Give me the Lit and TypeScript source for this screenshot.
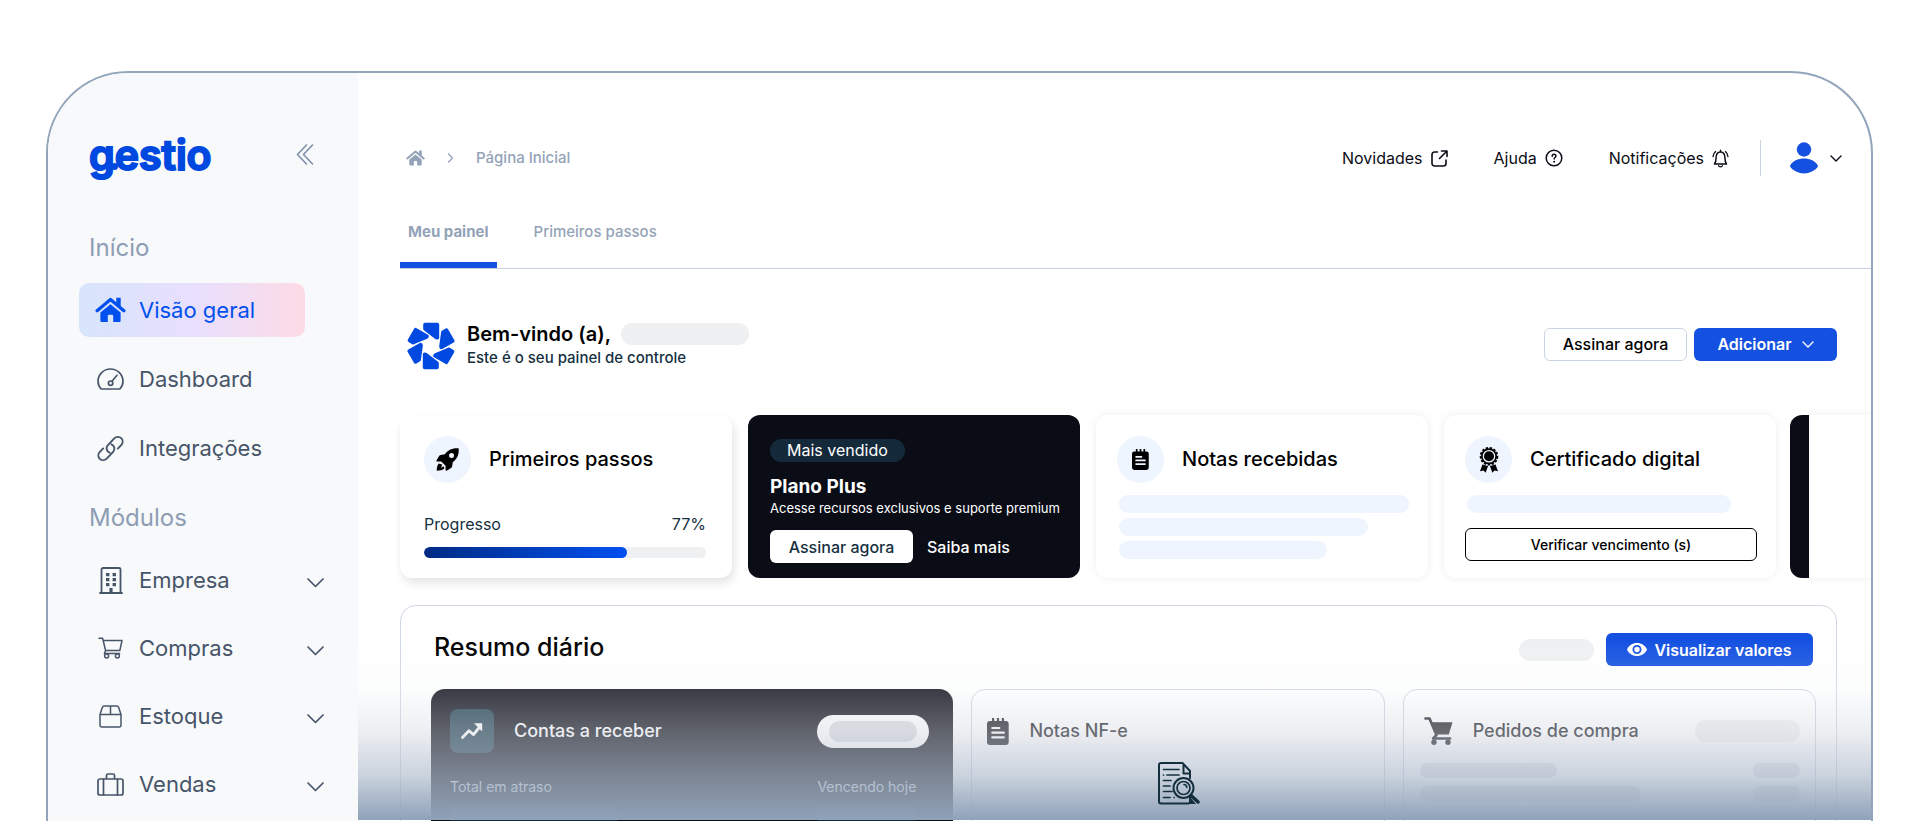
import { LitElement, html, css, svg, nothing, TemplateResult } from "lit";
import { customElement, property } from "lit/decorators.js";
import { classMap } from "lit/directives/class-map.js";

type Glyph = { w: number; h: number; box: string; body: TemplateResult };

const line = (d: string, width: number) =>
  svg`<path d=${d} fill="none" stroke="currentColor" stroke-width=${width} stroke-linecap="round" stroke-linejoin="round"></path>`;

const house = svg`
  <path d="M1.6 14.2 15.5 2.6 29.4 14.2" fill="none" stroke="currentColor" stroke-width="3.4" stroke-linecap="round" stroke-linejoin="round"></path>
  <path d="M21.5 0.8h4.6v9.4l-4.6-4z" fill="currentColor"></path>
  <path d="M15.5 7.4 26 16.2V24.6a1.4 1.4 0 0 1-1.4 1.4H18.3V19.6a1.2 1.2 0 0 0-1.2-1.2h-3.2a1.2 1.2 0 0 0-1.2 1.2V26H6.4A1.4 1.4 0 0 1 5 24.600V16.200z" fill="currentColor"></path>`;

const notepad = svg`
  <path d="M3 3h2V.6a.6.6 0 0 1 2.200 0V3h2.700V.6a.6.6 0 0 1 2.200 0V3h2.700V.6a.6.6 0 0 1 2.200 0V3h1.700a3 3 0 0 1 3 3v18a3 3 0 0 1-3 3H3a3 3 0 0 1-3-3V6a3 3 0 0 1 3-3z" fill="currentColor"></path>
  <path d="M5.300 10h7M5.300 14.700h11.500M5.300 19.400h11.500" stroke="var(--cut, #fff)" stroke-width="2.200" stroke-linecap="round"></path>`;

const glyphs: Record<string, Glyph> = {
  house: { w: 31, h: 26, box: "0 0 31 27", body: house },
  houseSmall: { w: 19, h: 16, box: "0 0 31 27", body: house },
  gauge: {
    w: 27, h: 22, box: "0 0 27 22",
    body: svg`${line("M4.200 21C2.300 19 1 16.500 1 13.300 1 6.400 6.600 1 13.500 1S26 6.400 26 13.300c0 3.200-1.300 5.700-3.200 7.700z", 1.700)}
      ${line("M15 13.300 20 7.300", 1.700)}<circle cx="13.600" cy="15.200" r="2.200" fill="none" stroke="currentColor" stroke-width="1.700"></circle>`,
  },
  link: {
    w: 27, h: 27, box: "0 0 27 27",
    body: svg`${line("M12.600 17.700c-3.200-1.300-4-5.200-1.700-7.600L17.300 3.400c2-2 5-2.100 6.900-.2s1.900 4.900 0 6.900l-3.400 3.500", 1.900)}
      ${line("M14.400 9.300c3.200 1.300 4 5.200 1.700 7.600L9.700 23.600c-2 2-5 2.100-6.900.2s-1.900-4.900 0-6.900l3.400-3.500", 1.900)}`,
  },
  building: {
    w: 24, h: 27, box: "0 0 24 27",
    body: svg`${line("M1 26h22M2.500 26V2.500A1.500 1.500 0 0 1 4 1h16a1.500 1.500 0 0 1 1.500 1.500V26", 1.800)}
      <path d="M7 6h3.400v3.200H7zM13.600 6H17v3.200h-3.400zM7 11h3.400v3.200H7zM13.600 11H17v3.200h-3.400zM7 16h3.400v3.200H7zM13.600 16H17v3.200h-3.400zM10.400 21h3.200v5h-3.200z" fill="currentColor"></path>`,
  },
  cart: {
    w: 25, h: 22, box: "0 0 25 22",
    body: svg`${line("M1 1.200h3.600l3 12.300h14.200L24 3.600H5.200M7.600 13.500l-1.200 3h15.200", 1.500)}
      <circle cx="8.600" cy="19" r="2" fill="none" stroke="currentColor" stroke-width="1.500"></circle><circle cx="19.400" cy="19" r="2" fill="none" stroke="currentColor" stroke-width="1.500"></circle>`,
  },
  box: {
    w: 23, h: 23, box: "0 0 23 23",
    body: line("M1 9.500V20a2 2 0 0 0 2 2h17a2 2 0 0 0 2-2V9.500L19.700 2.600A2.200 2.200 0 0 0 17.600 1H5.400a2.200 2.200 0 0 0-2.100 1.600zH22M11.500 1v8.500", 1.500),
  },
  suitcase: {
    w: 27, h: 23, box: "0 0 27 23",
    body: svg`${line("M3 6h21a2 2 0 0 1 2 2v12a2 2 0 0 1-2 2H3a2 2 0 0 1-2-2V8a2 2 0 0 1 2-2zM9.500 6V2.500A1.500 1.500 0 0 1 11 1h5a1.500 1.500 0 0 1 1.500 1.500V6", 1.700)}
      ${line("M6.500 6v16M20.500 6v16", 1.700)}`,
  },
  chevronDown: { w: 17, h: 10, box: "0 0 17 10", body: line("M1 1l7.500 7.500L16 1", 1.700) },
  chevronSmall: { w: 12, h: 7, box: "0 0 12 7", body: line("M1 1l5 5 5-5", 1.400) },
  chevronRight: { w: 7, h: 10, box: "0 0 7 10", body: line("M1.500 1l4 4-4 4", 1.300) },
  collapse: { w: 18, h: 21, box: "0 0 18 21", body: line("M10.500 1 1.500 10.500l9 9.500M16.500 1l-9 9.500 9 9.500", 1.600) },
  external: {
    w: 17, h: 17, box: "0 0 17 17",
    body: line("M6.500 2H3.500A2.500 2.500 0 0 0 1 4.500V13.500A2.500 2.500 0 0 0 3.500 16h9a2.500 2.500 0 0 0 2.500-2.500V10M10.500 1H16v5.500M16 1 8.500 8.500", 1.600),
  },
  help: {
    w: 18, h: 18, box: "0 0 18 18",
    body: svg`<circle cx="9" cy="9" r="7.800" fill="none" stroke="currentColor" stroke-width="1.500"></circle>
      ${line("M7.200 7.200c0-2.600 3.700-2.500 3.700-.1 0 1.300-1.800 1.500-1.800 3", 1.500)}<circle cx="9.100" cy="12.700" r="1" fill="currentColor"></circle>`,
  },
  bell: {
    w: 17, h: 19, box: "0 0 17 19",
    body: svg`${line("M2.500 15h12c-1.300-1.500-1.500-3-1.500-5.500C13 5.500 11.500 3 8.500 3S4 5.500 4 9.500C4 12 3.800 13.500 2.500 15zM8.500 3V1.200", 1.500)}
      ${line("M6.600 16.800c.6 1.300 3.200 1.300 3.800 0M3.600 2.600C2 4 1.200 5.600 1 7.600M13.400 2.600C15 4 15.800 5.600 16 7.600", 1.300)}`,
  },
  user: {
    w: 30, h: 32, box: "0 0 30 32",
    body: svg`<circle cx="15" cy="7.500" r="7.200" fill="currentColor"></circle>
      <path d="M1.200 23.400C3.600 19 9 16.600 15 16.600s11.400 2.400 13.800 6.800a1.400 1.400 0 0 1 0 1.300C26 28.600 20.500 31.400 15 31.400S4 28.600 1.200 24.700a1.400 1.400 0 0 1 0-1.300z" fill="currentColor"></path>`,
  },
  rocket: {
    w: 25, h: 25, box: "0 0 26 26",
    body: svg`<path fill-rule="evenodd" d="M24.600 1.400c-6.600-.6-11.200 1.700-14.400 6.200L6 8.200c-.7.100-1.300.5-1.700 1.100L1.500 14c-.3.600 0 1.200.7 1.200l4.300-.1 4.500 4.500-.1 4.300c0 .7.700 1 1.200.7l4.600-2.800c.6-.4 1-1 1.100-1.700l.7-4.200c4.500-3.300 6.700-7.900 6.100-14.500zM17.200 11.400a2.600 2.600 0 1 1 0-5.200 2.600 2.600 0 0 1 0 5.200z" fill="currentColor"></path>
      <path d="M3.800 17.200c-1.500 1.700-2 4.500-2 7.500 3.300 0 6.300-.6 7.900-2.300l-.6-2.400-2.700 1.500 1-3.300z" fill="currentColor"></path>`,
  },
  notepadSmall: { w: 17, h: 21, box: "0 0 22 27", body: notepad },
  notepad: { w: 22, h: 27, box: "0 0 22 27", body: notepad },
  medal: {
    w: 20, h: 26, box: "0 0 20 26",
    body: svg`<circle cx="10" cy="9.300" r="8.400" fill="none" stroke="currentColor" stroke-width="1.800" stroke-dasharray="2.400 1.600"></circle>
      <circle cx="10" cy="9.300" r="7.200" fill="none" stroke="currentColor" stroke-width="1.800"></circle><circle cx="10" cy="9.300" r="5" fill="currentColor"></circle>
      <path d="M3.600 17.200 1 24.200l3.600-.6 2 2.200 2.600-7c-2-.2-4-.6-5.600-1.600zM16.400 17.200l2.600 7-3.600-.6-2 2.200-2.600-7c2-.2 4-.6 5.600-1.600z" fill="currentColor"></path>`,
  },
  eye: {
    w: 20, h: 13, box: "0 0 20 13",
    body: svg`<path fill-rule="evenodd" d="M10 0C5.500 0 1.700 2.600 0 6.500 1.700 10.400 5.500 13 10 13s8.300-2.600 10-6.500C18.300 2.600 14.500 0 10 0zm0 11a4.500 4.500 0 1 1 0-9 4.500 4.500 0 0 1 0 9zm0-7.200a2.700 2.700 0 1 0 0 5.400 2.700 2.700 0 0 0 0-5.400z" fill="currentColor"></path>`,
  },
  trend: {
    w: 22, h: 18, box: "0 0 22 18",
    body: svg`<path d="M1.500 15.500 8 8.800l4.500 3.800L19 4.500" fill="none" stroke="currentColor" stroke-width="2.800" stroke-linecap="round" stroke-linejoin="round"></path><path d="M13 1.200h8.200v8.200z" fill="currentColor"></path>`,
  },
  cartSolid: {
    w: 29, h: 28, box: "0 0 29 28",
    body: svg`<path d="M1.500 1.500h4l7 16.500-3.300 3.500H26" fill="none" stroke="currentColor" stroke-width="2.700" stroke-linecap="round" stroke-linejoin="round"></path>
      <path d="M6.300 5.200h22.200l-3.700 12.300H11.400z" fill="currentColor"></path><circle cx="10" cy="25.200" r="2.700" fill="currentColor"></circle><circle cx="24" cy="25.200" r="2.700" fill="currentColor"></circle>`,
  },
  docSearch: {
    w: 42, h: 43, box: "0 0 42 43",
    body: svg`${line("M32 12v4M32 34v5.500A2 2 0 0 1 30 41.500H3A2 2 0 0 1 1 39.500V3A2 2 0 0 1 3 1H24.500L32 9v2.500H25.500V2", 2)}
      ${line("M5.500 7.500H21M9 13h12M5.500 13h.1M5.500 18.500H13M5.500 24H12M5.500 29.500H14M5.500 35.500H12M16 35.500h.1", 1.700)}
      <circle cx="25.500" cy="26" r="10" fill="none" stroke="currentColor" stroke-width="2"></circle><circle cx="25.500" cy="26" r="6.500" fill="none" stroke="currentColor" stroke-width="1.700"></circle>
      ${line("M26 22.500a3 3 0 0 1 2.800 2.800", 1.700)}${line("M33 33.500 40 40", 3.500)}<path d="M31.500 34.500 38 42h-6.500z" fill="currentColor"></path>`,
  },
  aperture: {
    w: 48, h: 48, box: "-24 -24 48 48",
    body: svg`${[0, 60, 120, 180, 240, 300].map((a) =>
      svg`<path transform="rotate(${a})" d="M-6-21.400H6.400V-8.200L5.400-8.400-6-17.200z" fill="currentColor" stroke="currentColor" stroke-width="3.600" stroke-linejoin="round"></path>`)}`,
  },
};

@customElement("app-icon")
class AppIcon extends LitElement {
  @property() name = "";
  static styles = css`
    :host { display: inline-flex; flex: none; }
    svg { display: block; }
  `;
  render() {
    const g = glyphs[this.name];
    return g
      ? html`<svg width=${g.w} height=${g.h} viewBox=${g.box} aria-hidden="true">${g.body}</svg>`
      : nothing;
  }
}

@customElement("app-root")
class AppRoot extends LitElement {
  static styles = css`
    :host {
      display: flex;
      box-sizing: border-box;
      height: 100vh;
      padding: 71px 47px 0 46px;
      overflow: hidden;
      background: #fff;
      color: #000;
      font-family: Inter, "Noto Sans", sans-serif;
      font-size: 16px;
      line-height: 24px;
      --blue: #1551e1;
      --brand: #0049e0;
      --muted: #94a3b8;
      --navy: #0a0d16;
      --skeleton: #eff0f2;
      --ice: #eff5fe;
    }
    * { box-sizing: border-box; }
    button { font: inherit; color: inherit; border: 0; background: none; padding: 0; cursor: pointer; }
    a { color: inherit; text-decoration: none; }
    ul { list-style: none; margin: 0; padding: 0; }
    h1, h2, h3, p { margin: 0; font-weight: inherit; font-size: inherit; }

    .frame {
      position: relative;
      flex: 1;
      min-width: 0;
      display: flex;
      border: 2px solid #93a5bb;
      border-bottom: 0;
      border-radius: 82px 82px 0 0;
      overflow: hidden;
    }

    .side { flex: none; width: 310px; padding: 61px 34px 0 31px; background: #f8f9fb; color: #475569; }
    .brandrow { display: flex; align-items: center; justify-content: space-between; height: 46px; padding: 0 10px; margin-bottom: 52px; }
    .logo { position: relative; align-self: flex-start; font-weight: 600; font-size: 41px; line-height: 42px; color: var(--brand); -webkit-text-stroke: 2px var(--brand); }
    .logo::after { content: ""; position: absolute; left: 22px; bottom: 6px; width: 7px; height: 7px; border-radius: 50%; background: var(--brand); }
    .collapse { color: #7d8fa9; }
    .heading { padding-left: 10px; font-size: 24px; line-height: 32px; color: #8d9db4; margin-bottom: 19px; }
    .links { display: grid; gap: 15px; margin: 0 19px 27px 0; }
    .modules { display: grid; gap: 14px; }
    .item {
      display: flex;
      align-items: center;
      gap: 13px;
      width: 100%;
      height: 54px;
      padding-left: 16px;
      border-radius: 10px;
      font-size: 22px;
      line-height: 30px;
      text-align: left;
    }
    .item.on { background: linear-gradient(90deg, #d7e5fb, #e8dffe 50%, #fddbe5); color: #0050f0; }
    .slot { flex: none; width: 31px; display: flex; justify-content: center; }
    .label { flex: 1; }
    .more { display: flex; padding-top: 6px; }

    .main { flex: 1; min-width: 0; padding: 67px 0 0 42px; }
    .top { display: flex; align-items: center; justify-content: space-between; height: 36px; padding: 0 29px 0 6px; }
    .crumbs { display: flex; align-items: center; gap: 22px; color: var(--muted); font-size: 15px; font-weight: 500; }
    .tools { display: flex; align-items: center; color: #0a0d16; font-size: 16px; }
    .tool { display: flex; align-items: center; gap: 8px; margin-right: 46px; }
    .tool.last { margin-right: 0; padding-right: 31px; }
    .account { display: flex; align-items: center; gap: 11px; height: 36px; padding-left: 28px; border-left: 1px solid #cbd5e1; }
    .avatar { color: var(--blue); }
    .tabs { display: flex; gap: 28px; margin-top: 44px; border-bottom: 1px solid #c5cfdf; color: var(--muted); font-size: 15px; font-weight: 500; }
    .tab { padding: 0 9px 18px; border-bottom: 6px solid transparent; }
    .tab.on { font-weight: 700; border-color: var(--blue); padding: 0 8px 18px; }

    .welcome { display: flex; align-items: center; justify-content: space-between; margin: 53px 34px 46px 0; }
    .hello { display: flex; align-items: center; gap: 12px; padding-left: 7px; height: 47px; color: var(--brand); }
    .hello h1 { display: flex; align-items: center; gap: 10px; font-size: 20px; font-weight: 600; color: #000; }
    .hello p { color: #16303f; line-height: 24px; font-size: 15px; font-weight: 500; }
    .pill { display: block; border-radius: 12px; background: var(--skeleton); height: 22px; }
    .w128 { width: 128px; }
    .w75 { width: 75px; }
    .w105 { width: 105px; }
    .actions { display: flex; gap: 7px; align-items: center; }
    .welcome .actions { padding-bottom: 3px; }
    .btn {
      display: flex;
      align-items: center;
      justify-content: center;
      gap: 10px;
      min-width: 143px;
      height: 33px;
      padding: 0 16px;
      border-radius: 6px;
      font-weight: 500;
      background: #fff;
      white-space: nowrap;
    }
    .outline { border: 1px solid #cbd5e1; }
    .dark { border: 1px solid #000; width: 100%; font-size: 14px; }
    .primary { background: var(--blue); color: #fff; font-weight: 600; }

    .strip { display: flex; gap: 16px; overflow: hidden; padding: 12px 0 20px 12px; margin: -12px 0 7px -12px; }
    .card {
      flex: 0 0 332px;
      min-width: 0;
      height: 163px;
      padding: 21px 24px 0;
      border-radius: 12px;
      background: #fff;
      box-shadow: 0 0 8px rgba(0, 0, 0, 0.07);
    }
    .card.raised { box-shadow: 2px 5px 10px rgba(0, 0, 0, 0.11); }
    .card.plus { background: var(--navy); color: #fff; padding: 24px 22px 0; box-shadow: none; }
    .card.flush { padding: 21px 19px 0 21px; }
    .title { display: flex; align-items: center; gap: 18px; font-size: 20px; line-height: 45px; font-weight: 500; margin-bottom: 12px; white-space: nowrap; }
    .disc { flex: none; display: flex; align-items: center; justify-content: center; width: 47px; height: 47px; border-radius: 50%; background: var(--ice); --cut: var(--ice); }
    .progress { display: flex; justify-content: space-between; margin: 29px 2px 11px 0; color: #16303f; }
    .track { height: 11px; margin-right: 2px; border-radius: 6px; background: var(--skeleton); overflow: hidden; }
    .fill { height: 100%; border-radius: 6px; background: linear-gradient(90deg, #002b84, #0050f0); }
    .tag { display: block; width: fit-content; padding: 0 17px; border-radius: 12px; background: #14293a; line-height: 23px; color: #fff; }
    .plan { font-size: 19px; font-weight: 700; margin-top: 13px; }
    .desc { font-size: 13px; line-height: 18px; white-space: nowrap; }
    .buy { display: flex; align-items: center; gap: 14px; margin-top: 13px; font-weight: 500; }
    .buy .btn { color: #16303f; }
    .bars { display: grid; gap: 5px; padding-left: 2px; }
    .bar { height: 18px; border-radius: 9px; background: var(--ice); }
    .verify { margin-top: 15px; }
    .next { flex: 0 0 19px; height: 163px; margin-left: -2px; border-radius: 12px 0 0 12px; background: var(--navy); }
    .after { flex: 1; height: 163px; margin-left: -16px; background: #fff; box-shadow: 0 0 8px rgba(0, 0, 0, 0.07); }

    .panel { margin-right: 34px; padding: 27px 20px 0 30px; height: 400px; border: 1px solid #cfd7e2; border-radius: 16px; }
    .phead { display: flex; align-items: flex-start; justify-content: space-between; padding: 0 3px; margin-bottom: 23px; }
    .phead h2 { font-size: 25px; font-weight: 500; line-height: 28px; }
    .phead .actions { gap: 12px; }
    .phead .btn { gap: 7px; min-width: 207px; }
    .grid { display: grid; grid-template-columns: 522fr 413fr 413fr; gap: 18px; height: 300px; }
    .cell { border: 1px solid #cbd5e1; border-radius: 14px; padding: 19px 15px; color: #16191f; font-size: 18px; background: #fff; }
    .cell.ink { background: var(--navy); border: 0; color: #fff; padding: 20px 24px 0 19px; }
    .row { display: flex; align-items: center; justify-content: space-between; height: 44px; }
    .lead { display: flex; align-items: center; gap: 20px; white-space: nowrap; font-weight: 500; }
    .chart { display: flex; align-items: center; justify-content: center; width: 44px; height: 44px; border-radius: 8px; background: #1d3c4d; }
    .badge { width: 112px; height: 33px; padding: 6px 12px; border-radius: 17px; background: #fff; }
    .badge .pill { height: 21px; background: #d9dbe0; }
    .pair { display: grid; grid-template-columns: 1fr 112px; font-size: 14px; margin-top: 22px; row-gap: 6px; color: #e6e9ee; }
    .pair .bar { background: #14293a; height: 22px; }
    .w168 { width: 168px; }
    .w100 { width: 100px; }
    .doc { position: relative; z-index: 2; display: flex; justify-content: center; color: #14303f; padding: 9px 0 0 2px; }
    .orders { padding: 19px 15px 0 16px; }
    .orders .bar { height: 15px; background: #e2e5ea; }
    .rows { display: grid; gap: 8px; margin-top: 10px; }
    .rows div { display: flex; justify-content: space-between; }
    .w137 { width: 137px; }
    .w221 { width: 221px; }
    .w47 { width: 47px; }
    .ico { margin-left: 4px; display: flex; }

    .fade {
      position: absolute;
      left: 310px;
      right: 0;
      bottom: 1px;
      height: 180px;
      pointer-events: none;
      background: linear-gradient(
        rgba(255, 255, 255, 0),
        rgba(240, 244, 245, 0.2) 27%,
        rgba(214, 217, 225, 0.42) 50%,
        rgba(178, 190, 206, 0.68) 75%,
        #90a2b8
      );
    }
  `;

  private nav = [
    ["house", "Visão geral"],
    ["gauge", "Dashboard"],
    ["link", "Integrações"],
  ];
  private modules = [
    ["building", "Empresa"],
    ["cart", "Compras"],
    ["box", "Estoque"],
    ["suitcase", "Vendas"],
  ];

  private icon = (name: string) => html`<app-icon name=${name}></app-icon>`;

  private sidebar() {
    return html`<nav class="side">
      <div class="brandrow">
        <a class="logo" href="#">gestio</a>
        <button class="collapse" aria-label="Recolher menu">${this.icon("collapse")}</button>
      </div>
      <h2 class="heading">Início</h2>
      <ul class="links">
        ${this.nav.map(([i, t], n) => html`<li><a href="#" class=${classMap({ item: true, on: n === 0 })}>
          <span class="slot">${this.icon(i)}</span><span class="label">${t}</span></a></li>`)}
      </ul>
      <h2 class="heading">Módulos</h2>
      <ul class="modules">
        ${this.modules.map(([i, t]) => html`<li><button class="item" aria-expanded="false">
          <span class="slot">${this.icon(i)}</span><span class="label">${t}</span><span class="more">${this.icon("chevronDown")}</span></button></li>`)}
      </ul>
    </nav>`;
  }

  private header() {
    return html`<header class="top">
        <div class="crumbs">${this.icon("houseSmall")}${this.icon("chevronRight")}<a href="#">Página Inicial</a></div>
        <div class="tools">
          <a class="tool" href="#">Novidades ${this.icon("external")}</a>
          <a class="tool" href="#">Ajuda ${this.icon("help")}</a>
          <button class="tool last">Notificações ${this.icon("bell")}</button>
          <button class="account" aria-label="Conta"><app-icon class="avatar" name="user"></app-icon>${this.icon("chevronSmall")}</button>
        </div>
      </header>
      <div class="tabs" role="tablist">
        <button class="tab on" role="tab" aria-selected="true">Meu painel</button>
        <button class="tab" role="tab" aria-selected="false">Primeiros passos</button>
      </div>`;
  }

  private cards() {
    return html`<section class="strip">
      <article class="card raised">
        <h3 class="title"><span class="disc">${this.icon("rocket")}</span>Primeiros passos</h3>
        <div class="progress"><span>Progresso</span><span>77%</span></div>
        <div class="track"><div class="fill" style="width:72%"></div></div>
      </article>
      <article class="card plus">
        <span class="tag">Mais vendido</span>
        <h3 class="plan">Plano Plus</h3>
        <p class="desc">Acesse recursos exclusivos e suporte premium</p>
        <div class="buy"><button class="btn">Assinar agora</button><a href="#">Saiba mais</a></div>
      </article>
      <article class="card flush">
        <h3 class="title"><span class="disc">${this.icon("notepadSmall")}</span>Notas recebidas</h3>
        <div class="bars">
          ${[290, 249, 208].map((w) => html`<div class="bar" style="width:${w}px"></div>`)}
        </div>
      </article>
      <article class="card flush">
        <h3 class="title"><span class="disc">${this.icon("medal")}</span>Certificado digital</h3>
        <div class="bars"><div class="bar" style="width:264px"></div></div>
        <button class="btn dark verify">Verificar vencimento (s)</button>
      </article>
      <div class="next"></div>
      <div class="after"></div>
    </section>`;
  }

  private summary() {
    return html`<section class="panel">
      <div class="phead">
        <h2>Resumo diário</h2>
        <div class="actions"><span class="pill w75"></span><button class="btn primary">${this.icon("eye")}Visualizar valores</button></div>
      </div>
      <div class="grid">
        <article class="cell ink">
          <div class="row">
            <h3 class="lead"><span class="chart">${this.icon("trend")}</span>Contas a receber</h3>
            <span class="badge"><span class="pill"></span></span>
          </div>
          <div class="pair"><span>Total em atraso</span><span>Vencendo hoje</span>
            <span class="bar w168"></span><span class="bar w100"></span></div>
        </article>
        <article class="cell">
          <div class="row"><h3 class="lead">${this.icon("notepad")}Notas NF-e</h3></div>
          <div class="doc">${this.icon("docSearch")}</div>
        </article>
        <article class="cell orders">
          <div class="row">
            <h3 class="lead"><span class="ico">${this.icon("cartSolid")}</span>Pedidos de compra</h3>
            <span class="pill w105"></span>
          </div>
          <div class="rows">
            <div><span class="bar w137"></span><span class="bar w47"></span></div>
            <div><span class="bar w221"></span><span class="bar w47"></span></div>
          </div>
        </article>
      </div>
    </section>`;
  }

  render() {
    return html`<div class="frame">
      ${this.sidebar()}
      <main class="main">
        ${this.header()}
        <section class="welcome">
          <div class="hello">${this.icon("aperture")}
            <div><h1>Bem-vindo (a), <span class="pill w128"></span></h1><p>Este é o seu painel de controle</p></div>
          </div>
          <div class="actions">
            <button class="btn outline">Assinar agora</button>
            <button class="btn primary">Adicionar ${this.icon("chevronSmall")}</button>
          </div>
        </section>
        ${this.cards()} ${this.summary()}
      </main>
      <div class="fade"></div>
    </div>`;
  }
}
